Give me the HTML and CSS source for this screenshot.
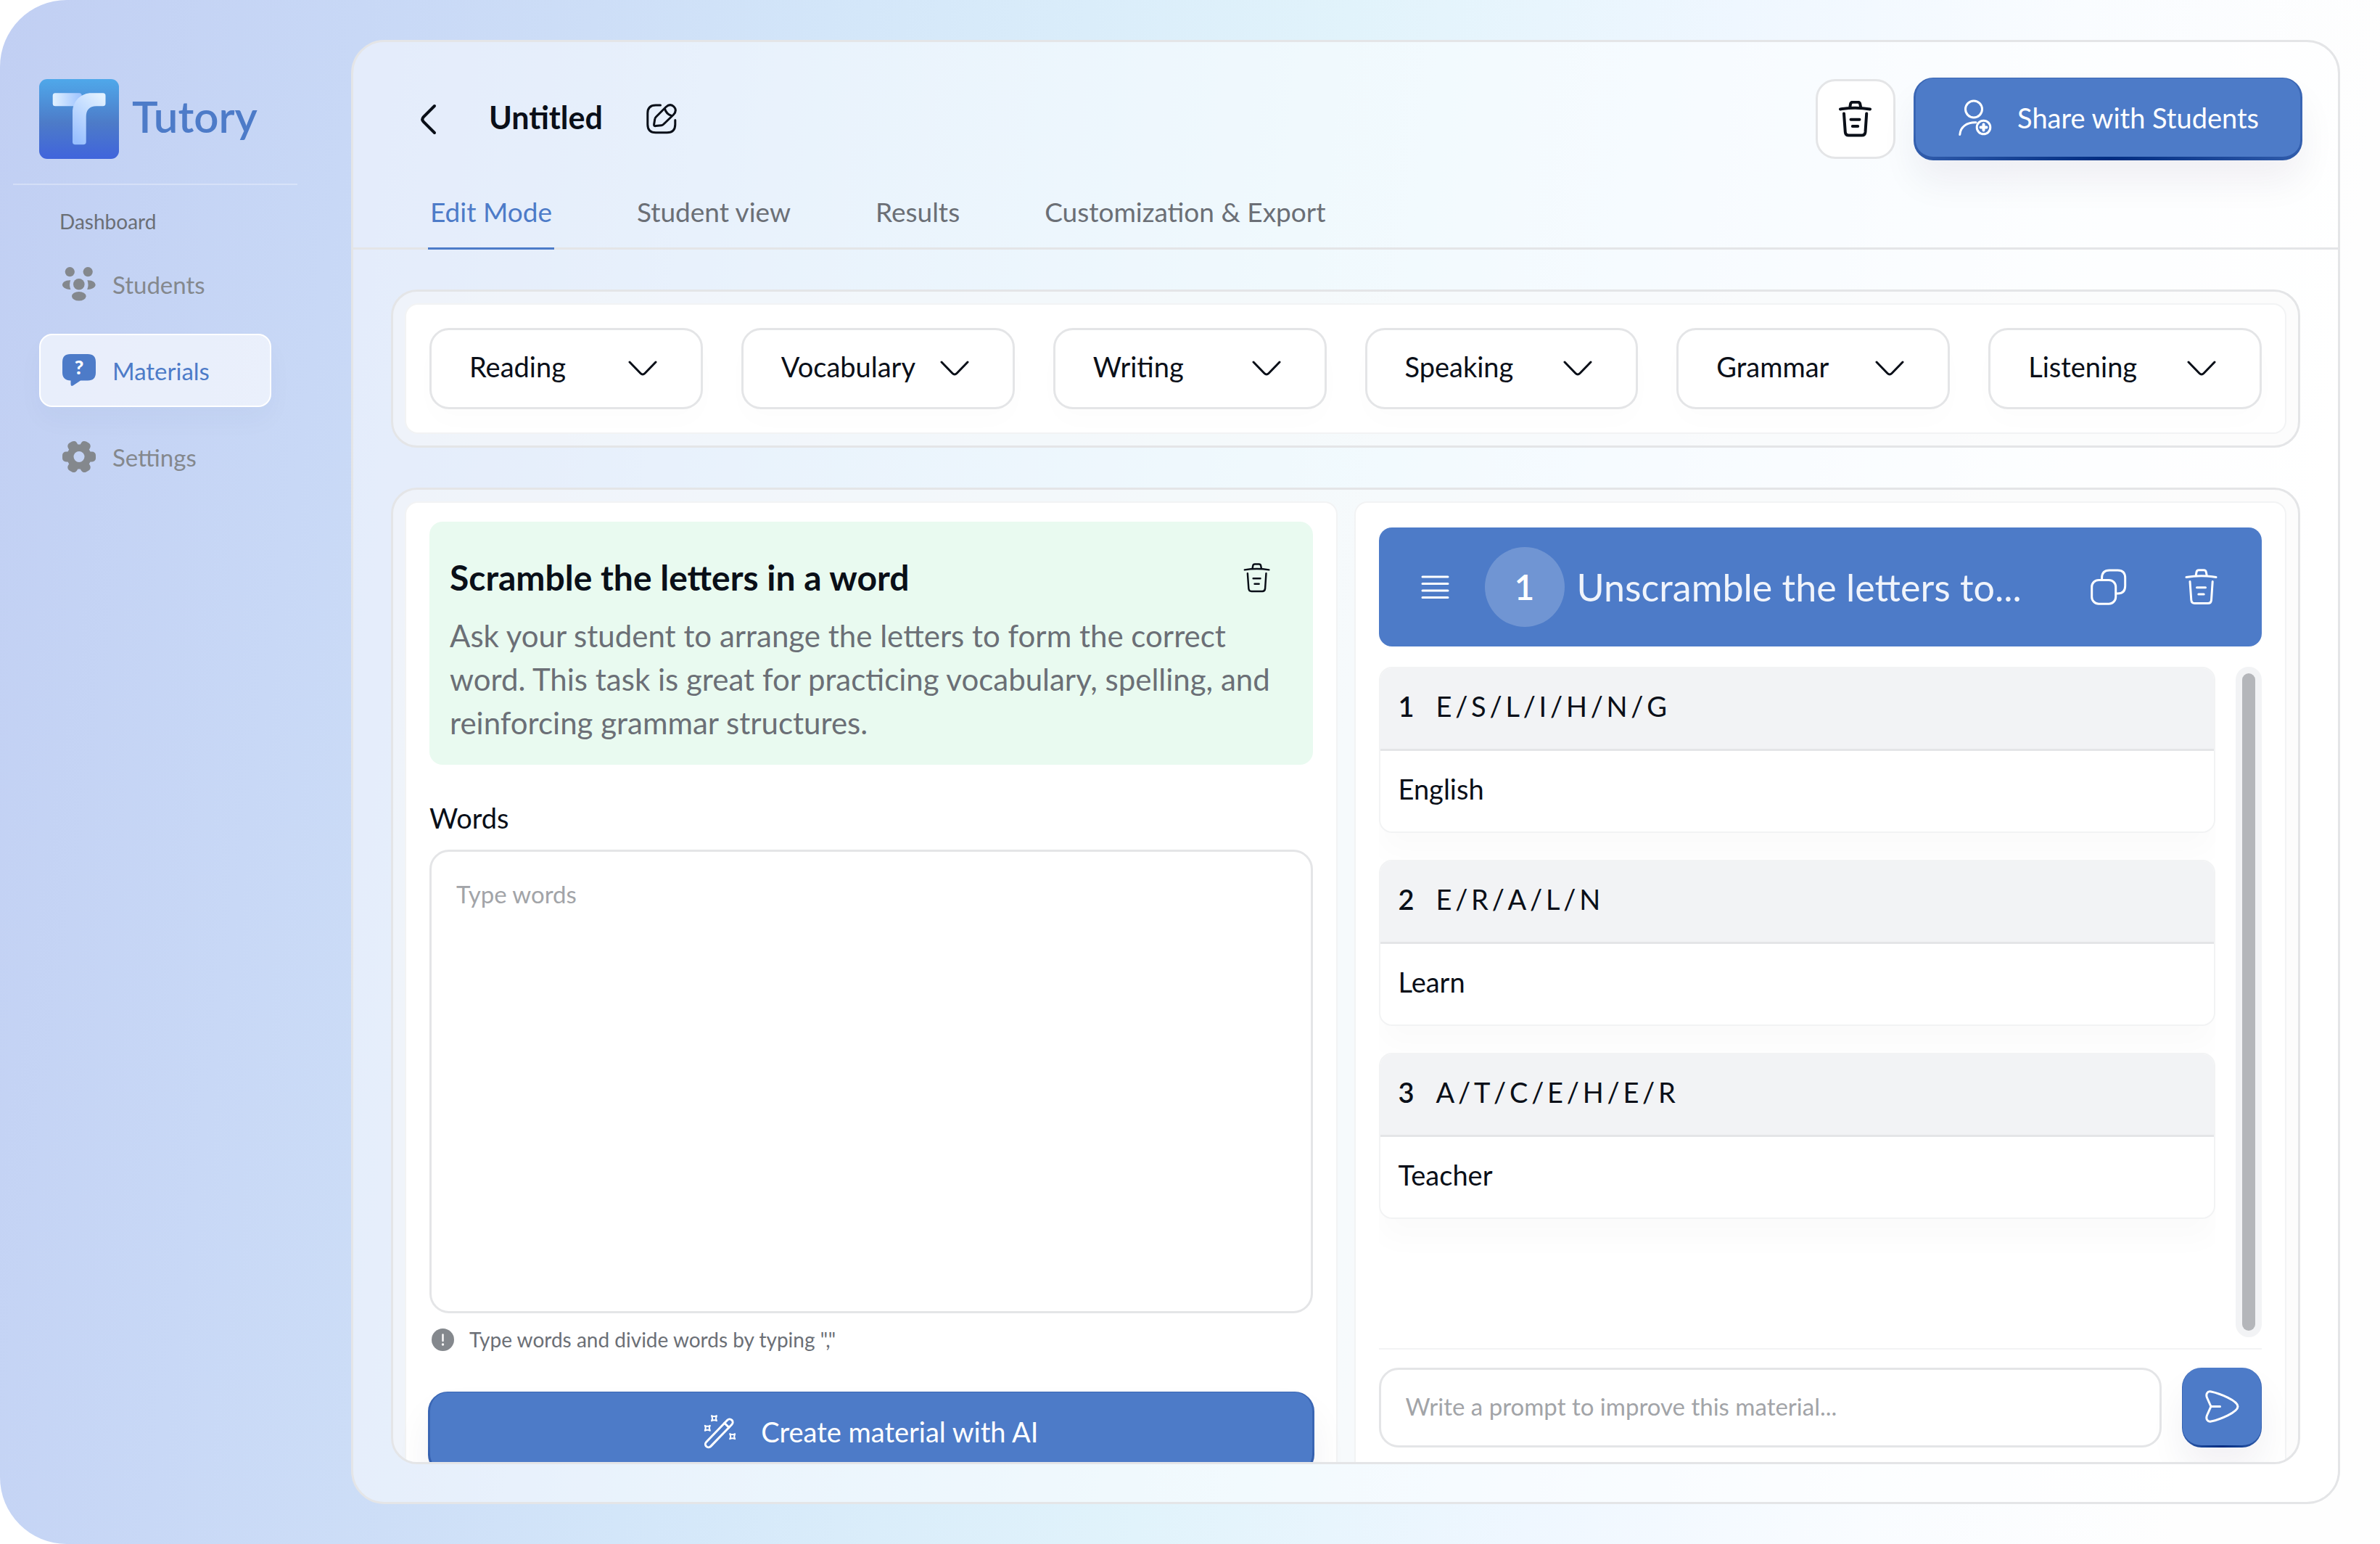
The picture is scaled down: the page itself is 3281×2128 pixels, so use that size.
FILE: index.html
```html
<!DOCTYPE html>
<html lang="en">
<head>
<meta charset="utf-8">
<title>Tutory – Materials</title>
<link rel="stylesheet" href="styles.css">
</head>
<body>
<svg class="sprite" aria-hidden="true">
  <defs>
    <symbol id="i-trash" viewBox="0 0 46 50"><path d="M2 11.4Q22.500 8.200 43 11.400M15.200 9L16 4.500Q16.500 1.800 19.300 1.800H26Q28.800 1.800 29.300 4.500L30.200 9M7 17.500L8.800 43Q9.200 47.500 13.500 47.500H31.800Q36 47.500 36.500 43L38.200 17.500M16.500 25.800H28.500M18.800 35H26.200"/></symbol>
    <symbol id="i-down" viewBox="0 0 40 22"><path d="M2 2L17 17.500Q20 20.500 23 17.500L38 2"/></symbol>
  </defs>
</svg>
<div class="app">
  <aside class="sidebar">
    <a class="brand" href="#">
      <svg class="brand-mark" viewBox="0 0 110 110" aria-hidden="true">
        <defs>
          <linearGradient id="g-tile" x1="0" y1="0" x2="0" y2="1"><stop offset="0" stop-color="#4fa8ea"/><stop offset=".55" stop-color="#4d7bc8"/><stop offset="1" stop-color="#4064dc"/></linearGradient>
          <linearGradient id="g-bar" x1="0" y1="0" x2="1" y2="0"><stop offset="0" stop-color="#e2f1ff"/><stop offset="1" stop-color="#9cc2ff"/></linearGradient>
          <linearGradient id="g-stem" x1=".8" y1="0" x2=".2" y2="1"><stop offset="0" stop-color="#e2f1ff"/><stop offset="1" stop-color="#98bfff"/></linearGradient>
        </defs>
        <rect width="110" height="110" rx="11" fill="url(#g-tile)"/>
        <rect x="18.700" y="19.300" width="40" height="18" rx="3.500" fill="url(#g-bar)"/>
        <path d="M46 86.500V46C46 30 58 19.300 72 19.300H88Q91.500 19.300 91.500 23V33.500Q91.500 37.300 88 37.300H79C69 37.300 64.700 43 64.700 52V86.500Q64.700 90.300 61 90.300H49.700Q46 90.300 46 86.500Z" fill="url(#g-stem)"/>
      </svg>
      <span class="brand-name">Tutory</span>
    </a>
    <p class="nav-title">Dashboard</p>
    <nav class="nav">
      <a class="nav-item" href="#">
        <svg class="nav-icon" viewBox="0 0 46 47" aria-hidden="true"><circle cx="10.300" cy="6.600" r="6.600"/><circle cx="35.200" cy="6.600" r="6.600"/><circle cx="22.800" cy="23.700" r="7.800"/><ellipse cx="22.800" cy="40.300" rx="9.800" ry="6.300"/><path d="M11.200 18.200C3.500 18 0 21.500 0 24.600S4 31.200 11.400 30.900Q8.800 24.500 11.200 18.200ZM34.400 18.200C42 18 45.600 21.500 45.600 24.600S41.600 31.200 34.200 30.900Q36.800 24.500 34.400 18.200Z"/></svg>
        <span>Students</span>
      </a>
      <a class="nav-item is-active" href="#" aria-current="page">
        <svg class="nav-icon" viewBox="0 0 46 47" aria-hidden="true"><path d="M11 1H35Q46 1 46 12V26.500Q46 37.500 35 37.500H25L14.500 44.500Q11.500 46 11.500 42.500V37.500Q0 37 0 26.500V12Q0 1 11 1Z"/><text class="nav-mark" x="23" y="29">?</text></svg>
        <span>Materials</span>
      </a>
      <a class="nav-item" href="#">
        <svg class="nav-icon" viewBox="0 0 46 47" aria-hidden="true">
          <mask id="m-gear"><rect width="46" height="47" fill="#fff"/><circle cx="23" cy="23.500" r="7.500" fill="#000"/></mask>
          <g mask="url(#m-gear)"><circle cx="23" cy="23.500" r="17"/><rect x="0" y="16.500" width="46" height="14" rx="5"/><rect x="0" y="16.500" width="46" height="14" rx="5" transform="rotate(60 23 23.500)"/><rect x="0" y="16.500" width="46" height="14" rx="5" transform="rotate(120 23 23.500)"/></g>
        </svg>
        <span>Settings</span>
      </a>
    </nav>
  </aside>

  <main class="panel">
    <header class="topbar">
      <button class="icon-btn" type="button" aria-label="Back"><svg class="line back" viewBox="0 0 21 41" aria-hidden="true"><path d="M19 2L3.500 17.500Q1 20.500 3.500 23.500L19 39"/></svg></button>
      <h1 class="title">Untitled</h1>
      <button class="icon-btn" type="button" aria-label="Rename"><svg class="line rename" viewBox="0 0 42 42" aria-hidden="true"><path d="M19.500 2H13Q1.800 2 1.800 13V28.500Q1.800 39.800 13 39.800H28.500Q39.800 39.800 39.800 28.500V22.500M10.600 28.500L11.800 21Q12 19.500 13.500 18L27 4.500Q33 -1 38 4Q43 9 37.500 15L24 28Q22.500 29.500 21 29.700L13 30.600Q10.400 31 10.600 28.500ZM25.500 7Q27.500 14 34.500 16.500"/></svg></button>
      <button class="square-btn" type="button" aria-label="Delete material"><svg class="line heavy" aria-hidden="true"><use href="#i-trash"/></svg></button>
      <button class="primary-btn share" type="button">
        <svg class="line light" viewBox="0 0 47 50" aria-hidden="true"><circle cx="21" cy="13.500" r="11.500"/><circle cx="34.500" cy="38.500" r="9.300"/><path d="M1.800 48.500C2.500 38 11 31.500 24 31.800"/><path class="plus" d="M34.500 34.500V42.500M30.500 38.500H38.500"/></svg>
        Share with Students
      </button>
    </header>
    <nav class="tabs">
      <a class="tab is-active" href="#" aria-current="page">Edit Mode</a>
      <a class="tab" href="#">Student view</a>
      <a class="tab" href="#">Results</a>
      <a class="tab" href="#">Customization &amp; Export</a>
    </nav>

    <div class="content">
      <section class="frame skills" aria-label="Skills">
        <div class="sheet skill-row">
          <div class="picker"><select aria-label="Reading tasks"><option>Reading</option></select><svg class="line" aria-hidden="true"><use href="#i-down"/></svg></div>
          <div class="picker"><select aria-label="Vocabulary tasks"><option>Vocabulary</option></select><svg class="line" aria-hidden="true"><use href="#i-down"/></svg></div>
          <div class="picker"><select aria-label="Writing tasks"><option>Writing</option></select><svg class="line" aria-hidden="true"><use href="#i-down"/></svg></div>
          <div class="picker"><select aria-label="Speaking tasks"><option>Speaking</option></select><svg class="line" aria-hidden="true"><use href="#i-down"/></svg></div>
          <div class="picker"><select aria-label="Grammar tasks"><option>Grammar</option></select><svg class="line" aria-hidden="true"><use href="#i-down"/></svg></div>
          <div class="picker"><select aria-label="Listening tasks"><option>Listening</option></select><svg class="line" aria-hidden="true"><use href="#i-down"/></svg></div>
        </div>
      </section>

      <div class="frame workspace">
        <form class="sheet pane editor">
          <div class="task">
            <div class="task-head">
              <h2>Scramble the letters in a word</h2>
              <button class="icon-btn" type="button" aria-label="Remove task"><svg class="line small-trash" aria-hidden="true"><use href="#i-trash"/></svg></button>
            </div>
            <p>Ask your student to arrange the letters to form the correct word. This task is great for practicing vocabulary, spelling, and reinforcing grammar structures.</p>
          </div>
          <label class="field-label" for="words">Words</label>
          <textarea id="words" class="words" placeholder="Type words"></textarea>
          <p class="hint"><svg viewBox="0 0 31 31" aria-hidden="true"><circle cx="15.500" cy="15.500" r="15.500" fill="#84888d"/><path d="M15.500 8.500V17" stroke="#fff" stroke-width="2.400" stroke-linecap="round"/><circle cx="15.500" cy="22" r="1.700" fill="#fff"/></svg>Type words and divide words by typing ","</p>
          <button class="primary-btn create" type="button">
            <svg class="line light" viewBox="0 0 45 47" aria-hidden="true">
              <g transform="rotate(-46 21.300 25.300)"><rect x="-4" y="21" width="50.500" height="8.600" rx="4.300"/><path d="M36.500 21V29.600"/></g>
              <g class="sparks"><path transform="translate(14.500 4.700)" d="M-3.500-3.500Q0-1.500 3.500-3.500Q1.500 0 3.500 3.500Q0 1.500-3.500 3.500Q-1.500 0-3.500-3.500Z"/><path transform="translate(5.300 18.300)" d="M-3.500-3.500Q0-1.500 3.500-3.500Q1.500 0 3.500 3.500Q0 1.500-3.500 3.500Q-1.500 0-3.500-3.500Z"/><path transform="translate(39.700 29.700)" d="M-3.500-3.500Q0-1.500 3.500-3.500Q1.500 0 3.500 3.500Q0 1.500-3.500 3.500Q-1.500 0-3.500-3.500Z"/></g>
            </svg>
            Create material with AI
          </button>
        </form>

        <section class="sheet pane preview">
          <header class="block-head">
            <svg class="line light burger" viewBox="0 0 37 33" aria-hidden="true"><path d="M1 2H36M1 11.500H36M1 21H36M1 30.500H36"/></svg>
            <span class="block-no">1</span>
            <h2>Unscramble the letters to...</h2>
            <button class="icon-btn" type="button" aria-label="Duplicate"><svg class="line light copy" viewBox="0 0 50 50" aria-hidden="true"><rect x="1.700" y="15.400" width="33" height="32.800" rx="9.500"/><path d="M15.600 14.500V12.500Q15.600 2 26 2H37.500Q47.700 2 47.700 12.500V23.500Q47.700 34 37.500 34H35.500"/></svg></button>
            <button class="icon-btn" type="button" aria-label="Delete block"><svg class="line light copy-trash" aria-hidden="true"><use href="#i-trash"/></svg></button>
          </header>
          <div class="results">
            <ol class="cards">
              <li class="card"><div class="card-top"><b>1</b><span>E&thinsp;/&thinsp;S&thinsp;/&thinsp;L&thinsp;/&thinsp;I&thinsp;/&thinsp;H&thinsp;/&thinsp;N&thinsp;/&thinsp;G</span></div><div class="card-answer">English</div></li>
              <li class="card"><div class="card-top"><b>2</b><span>E&thinsp;/&thinsp;R&thinsp;/&thinsp;A&thinsp;/&thinsp;L&thinsp;/&thinsp;N</span></div><div class="card-answer">Learn</div></li>
              <li class="card"><div class="card-top"><b>3</b><span>A&thinsp;/&thinsp;T&thinsp;/&thinsp;C&thinsp;/&thinsp;E&thinsp;/&thinsp;H&thinsp;/&thinsp;E&thinsp;/&thinsp;R</span></div><div class="card-answer">Teacher</div></li>
            </ol>
            <div class="track"><div class="thumb"></div></div>
          </div>
          <form class="prompt">
            <input type="text" aria-label="Prompt" placeholder="Write a prompt to improve this material...">
            <button class="primary-btn send" type="button" aria-label="Send"><svg class="line light" viewBox="0 0 47 45" aria-hidden="true"><path d="M2.600 10.500C0.500 5.500 3 1 8 2C20 4.500 45 14.500 45 22.500S20 40.500 8 43C3 44 0.500 39.500 2.600 34.500L7.500 23.500Q8 22.500 7.500 21.500ZM8 22.500H20.500"/></svg></button>
          </form>
        </section>
      </div>
    </div>
  </main>
</div>
</body>
</html>
```
FILE: styles.css
```css
:root {
  --ink: #0a0f18;
  --muted: #6b6f76;
  --placeholder: #a2a4a8;
  --blue: #4d7bc8;
  --line: #e4e5e7;
  --hair: #f2f3f4;
}

* { box-sizing: border-box; }

html { background: #fff; }

body {
  margin: 0;
  color: var(--ink);
  font-family: Lato, "Open Sans", sans-serif;
  font-size: 38px;
  line-height: 48px;
}

h1, h2, p, ol { margin: 0; padding: 0; font-weight: 400; }
ol { list-style: none; }
a { color: inherit; text-decoration: none; }
button, select, input, textarea { font: inherit; color: inherit; margin: 0; }
button { cursor: pointer; }
svg { display: block; flex: none; }
.sprite { position: absolute; width: 0; height: 0; }

.line {
  fill: none;
  stroke: currentColor;
  stroke-width: 3px;
  stroke-linecap: round;
  stroke-linejoin: round;
  overflow: visible;
}
.light { color: #fff; }

.icon-btn { padding: 0; border: 0; background: none; }

.app {
  display: flex;
  height: 100vh;
  padding: 55px 55px 55px 0;
  border-radius: 92px 0 0 92px;
  background: linear-gradient(98deg, #c1cff3 0%, #c8d8f6 14%, #cddef7 23%, #d3e6f9 32%, #daedfa 42%, #e1f3fb 52%, #eff7ff 67%, #f9fcff 80%, #fefefe 92%);
}

/* Sidebar */
.sidebar { flex: 0 0 484px; padding-top: 54px; }
.brand {
  display: flex;
  align-items: center;
  gap: 18px;
  margin: 0 74px 0 18px;
  padding: 0 0 34px 36px;
  border-bottom: 2px solid rgba(255, 255, 255, .3);
}
.brand-mark { width: 110px; height: 110px; }
.brand-name { padding-bottom: 8px; color: var(--blue); font-size: 60px; font-weight: 600; line-height: 72px; }
.nav-title { margin: 31px 0 17px 82px; color: var(--muted); font-size: 28px; line-height: 38px; }
.nav { display: flex; flex-direction: column; gap: 18px; margin: 0 110px 0 54px; }
.nav-item {
  display: flex;
  align-items: center;
  gap: 23px;
  height: 101px;
  padding: 0 30px;
  border: 2px solid transparent;
  border-radius: 18px;
  color: #84888d;
  font-size: 33px;
}
.nav-icon { width: 46px; height: 47px; fill: currentColor; }
.nav-mark { fill: #fff; font-size: 27px; font-weight: 900; text-anchor: middle; }
.nav-item.is-active {
  border-color: #fff;
  background: rgba(255, 255, 255, .62);
  box-shadow: 0 18px 36px rgba(40, 50, 110, .03);
  color: var(--blue);
}

/* Main panel */
.panel {
  display: flex;
  flex: 1;
  flex-direction: column;
  min-width: 0;
  border: 3px solid var(--line);
  border-radius: 46px;
  background: rgba(255, 255, 255, .5);
}
.topbar { display: flex; align-items: center; padding: 49px 49px 0 93px; }
.back { width: 21px; height: 41px; stroke-width: 4px; }
.rename { width: 42px; height: 42px; }
.title { margin: 0 60px 4px 73px; font-size: 43px; font-weight: 700; }
.square-btn {
  display: grid;
  place-items: center;
  width: 110px;
  height: 110px;
  margin: 0 25px 0 auto;
  padding: 0;
  border: 3px solid var(--line);
  border-radius: 27px;
  background: #fff;
}
.heavy { width: 46px; height: 50px; stroke-width: 4px; }
.primary-btn {
  display: flex;
  align-items: center;
  justify-content: center;
  gap: 34px;
  height: 114px;
  padding: 0;
  border: solid transparent;
  border-width: 1px 3px 5px;
  border-radius: 27px;
  background:
    linear-gradient(var(--blue), var(--blue)) padding-box,
    radial-gradient(60% 60% at 50% 100%, #002b80, #3a66b4) border-box;
  box-shadow: 0 30px 50px rgba(40, 20, 70, .06);
  color: #fff;
}
.share { padding: 0 57px 0 59px; }
.share svg { width: 47px; height: 50px; }
.share .plus { stroke-width: 4px; }

.tabs {
  display: flex;
  gap: 111px;
  margin-top: 47px;
  padding-left: 103px;
  border-bottom: 3px solid var(--line);
  color: var(--muted);
  font-size: 37px;
}
.tab { margin-bottom: -3px; padding: 0 3px 25px; border-bottom: 3px solid transparent; }
.tab.is-active { border-color: var(--blue); color: var(--blue); }

.content {
  display: flex;
  flex: 1;
  flex-direction: column;
  gap: 55px;
  min-height: 0;
  padding: 55px 52px 52px;
}
.frame {
  border: 3px solid var(--line);
  border-radius: 36px;
  background: rgba(249, 249, 249, .5);
}
.sheet { border: 2px solid var(--hair); border-radius: 18px; background: #fff; }

.skills { padding: 16px; }
.skill-row { display: grid; grid-template-columns: repeat(6, 1fr); gap: 53px; padding: 32px; }
.picker { display: grid; align-items: center; }
.picker > * { grid-area: 1 / 1; }
.picker select {
  width: 100%;
  height: 112px;
  padding: 0 110px 6px 52px;
  border: 3px solid var(--line);
  border-radius: 27px;
  background: #fff;
  box-shadow: 0 18px 36px rgba(0, 0, 0, .012);
  appearance: none;
  white-space: nowrap;
}
.picker svg { justify-self: end; width: 40px; height: 22px; margin-right: 63px; pointer-events: none; }

.workspace {
  display: grid;
  flex: 1;
  grid-template-columns: 1fr 1fr;
  gap: 23px;
  min-height: 0;
  padding: 16px 16px 0;
  overflow: hidden;
}
.pane {
  display: flex;
  flex-direction: column;
  min-width: 0;
  min-height: 0;
  border-bottom: 0;
  border-radius: 18px 18px 0 0;
}

/* Editor */
.editor { padding: 26px 32px 0; }
.task { flex: none; padding: 47px 28px 28px; border-radius: 18px; background: #e9faf0; }
.task-head { display: flex; align-items: center; justify-content: space-between; margin-bottom: 20px; padding-right: 30px; }
.task h2 { font-size: 48px; font-weight: 700; line-height: 60px; }
.task p { color: var(--muted); font-size: 42px; line-height: 60px; }
.small-trash { width: 38px; height: 41px; }
.field-label { margin: 49px 0 20px; }
.words {
  flex: none;
  height: 639px;
  padding: 36px 34px;
  border: 3px solid var(--line);
  border-radius: 27px;
  background: #fff;
  font-size: 33px;
  line-height: 44px;
  resize: none;
}
::placeholder { color: var(--placeholder); opacity: 1; }
.hint { display: flex; flex: none; align-items: center; gap: 21px; margin: 18px 0 54px; padding-left: 3px; color: var(--muted); font-size: 28px; line-height: 36px; }
.hint svg { width: 31px; height: 31px; }
.create { flex: none; margin: 0 -2px; }
.create svg { width: 45px; height: 47px; }
.sparks { stroke-width: 2px; }

/* Preview */
.preview { padding: 34px 32px 20px; }
.block-head {
  display: flex;
  flex: none;
  align-items: center;
  height: 164px;
  padding: 0 60px 0 59px;
  border-radius: 18px;
  background: var(--blue);
  color: #f0f4fb;
}
.burger { width: 37px; height: 33px; }
.block-no {
  flex: none;
  width: 110px;
  height: 110px;
  margin: 0 17px 0 50px;
  border-radius: 50%;
  background: rgba(255, 255, 255, .2);
  color: #fff;
  font-size: 48px;
  font-weight: 600;
  line-height: 110px;
  text-align: center;
}
.block-head h2 { flex: 1; font-size: 52px; line-height: 60px; white-space: nowrap; }
.copy { width: 50px; height: 50px; margin-right: 80px; }
.copy-trash { width: 46px; height: 50px; }

.results { display: flex; flex: 1; gap: 28px; min-height: 0; margin: 28px 0 15px; }
.cards { flex: 1; overflow: hidden; }
.card {
  margin-bottom: 37px;
  border: 2px solid var(--hair);
  border-radius: 18px;
  box-shadow: 0 30px 40px rgba(0, 0, 0, .02);
  background: #fff;
  overflow: hidden;
}
.card-top { display: flex; align-items: center; height: 114px; padding: 0 25px 8px; border-bottom: 3px solid var(--line); background: #f2f3f5; }
.card-top b { width: 52px; font-weight: 600; }
.card-answer { padding: 28px 25px 35px; }
.track { width: 36px; padding: 9px; border-radius: 18px; background: #f2f3f5; }
.thumb { height: 100%; border-radius: 9px; background: #b4b6ba; }

.prompt { display: flex; flex: none; gap: 28px; padding-top: 25px; border-top: 2px solid var(--hair); }
.prompt input {
  flex: 1;
  min-width: 0;
  height: 110px;
  padding: 0 34px 4px;
  border: 3px solid var(--line);
  border-radius: 27px;
  background: #fff;
  font-size: 33px;
}
.send { width: 110px; height: 110px; border-width: 0 1px 3px; }
.send svg { width: 47px; height: 45px; }
```
